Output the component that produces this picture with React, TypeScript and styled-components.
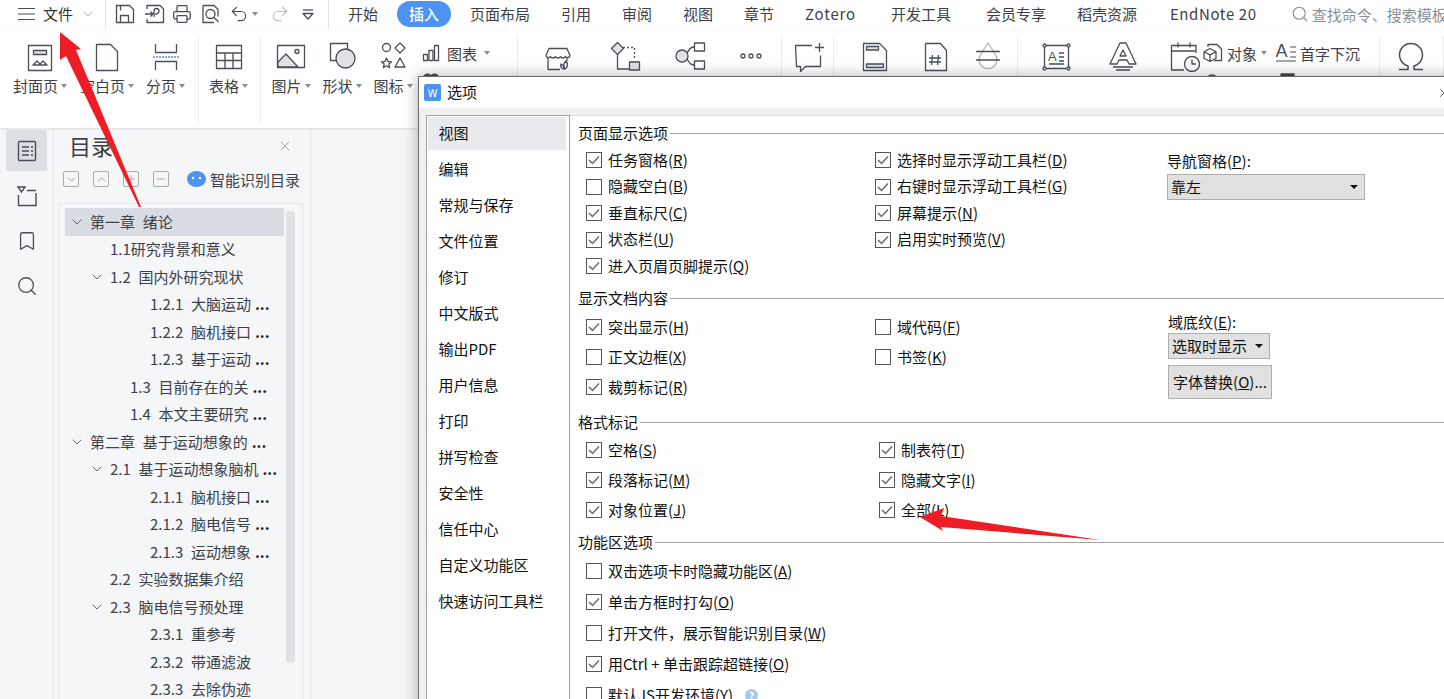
import React from 'react';
import styled, { createGlobalStyle } from 'styled-components';
import { Bookmark, ChevronDown, ChevronUp, Minus, Plus, Printer, Redo2, Search, Undo2, X } from 'lucide-react';

const INK = '#4a4e57';

const GlobalStyle = createGlobalStyle`
  html, body {
    margin: 0;
    height: 100%;
    overflow: hidden;
    background: #f5f6f8;
  }
  #root {
    height: 699px;
    overflow: hidden;
  }
  * { box-sizing: border-box; }
`;

const Page = styled.div`
  position: relative;
  width: 1444px;
  height: 699px;
  overflow: hidden;
  display: flex;
  flex-direction: column;
  font-family: "Noto Sans CJK SC", "Noto Sans", sans-serif;
  font-size: 15px;
  color: #3c4048;
  background: #f5f6f8;
`;

/* ---------- top bar ---------- */

const TopBar = styled.div`
  height: 30px;
  flex: none;
  display: flex;
  align-items: center;
  padding-bottom: 2px;
  background: #fff;
`;

const FileMenu = styled.div`
  width: 106px;
  height: 29px;
  flex: none;
  display: flex;
  align-items: center;
  padding-left: 18px;
  border-right: 1px solid #e3e3e3;
  color: #30343a;
`;

const FileLabel = styled.span`
  margin: 0 7px 0 8px;
  line-height: 20px;
`;

const QuickBar = styled.div`
  width: 223px;
  height: 29px;
  flex: none;
  display: flex;
  align-items: center;
  border-right: 1px solid #e3e3e3;
`;

const QuickSlot = styled.span<{ $ml: number }>`
  display: flex;
  margin-left: ${p => p.$ml}px;
`;

const Tabs = styled.div`
  flex: none;
  display: flex;
  align-items: center;
  gap: 7px;
  margin-left: 7px;
`;

const Tab = styled.div<{ $active?: boolean; $ml?: number; $ls?: number }>`
  height: 26px;
  margin-left: ${p => p.$ml ?? 0}px;
  padding: 0 12px;
  border-radius: 13px;
  line-height: 25px;
  letter-spacing: ${p => p.$ls ?? 0}px;
  white-space: nowrap;
  background: ${p => (p.$active ? '#4c93f2' : 'transparent')};
  color: ${p => (p.$active ? '#fff' : '#3c4048')};
  font-weight: ${p => (p.$active ? 500 : 400)};
`;

const SearchBox = styled.div`
  flex: none;
  display: flex;
  align-items: center;
  gap: 3px;
  margin-left: 22px;
  color: #8b9098;
  white-space: nowrap;
`;

/* ---------- ribbon ---------- */

const Ribbon = styled.div`
  height: 98px;
  flex: none;
  display: grid;
  grid-template-columns: 199px 62px 257px 264px 52px 184px 362px 1fr;
  padding-top: 6px;
  background: #fff;
  box-shadow: 0 1px 3px rgba(0, 0, 0, 0.1);
  position: relative;
  z-index: 1;
`;

const RibbonGroup = styled.div<{ $pl?: number; $gap?: number }>`
  height: 88px;
  display: flex;
  align-items: flex-start;
  gap: ${p => p.$gap ?? 0}px;
  padding-left: ${p => p.$pl ?? 0}px;
  border-right: 1px solid #ececee;
`;

const RibbonItem = styled.div<{ $w: number }>`
  width: ${p => p.$w}px;
  flex: none;
  display: flex;
  flex-direction: column;
  align-items: center;
  padding-top: 4px;
`;

const IconSlot = styled.div<{ $w: number; $ml?: number }>`
  width: ${p => p.$w}px;
  margin-left: ${p => p.$ml ?? 0}px;
  flex: none;
  display: flex;
  justify-content: center;
  padding-top: 4px;
`;

const ItemLabel = styled.div`
  display: flex;
  align-items: center;
  gap: 3px;
  margin-top: 4px;
  line-height: 20px;
  white-space: nowrap;
`;

const Caret = styled.i`
  width: 0;
  height: 0;
  border-left: 3.5px solid transparent;
  border-right: 3.5px solid transparent;
  border-top: 4px solid #8a8d93;
`;

const SmallStack = styled.div<{ $ml: number }>`
  margin-left: ${p => p.$ml}px;
  display: flex;
  flex-direction: column;
  gap: 4px;
  padding-top: 5px;
`;

const SmallRow = styled.div`
  height: 24px;
  display: flex;
  align-items: center;
`;

const SmallItem = styled.div<{ $gap: number; $w?: number }>`
  display: flex;
  align-items: center;
  gap: ${p => p.$gap}px;
  ${p => (p.$w ? `width: ${p.$w}px;` : '')}
  white-space: nowrap;
`;

/* ---------- workspace ---------- */

const Workspace = styled.div`
  flex: 1;
  min-height: 0;
  display: flex;
`;

const Rail = styled.div`
  width: 54px;
  flex: none;
  display: flex;
  flex-direction: column;
  gap: 4px;
  padding: 2px 0 0 6px;
  border-right: 1px solid #e6e7ea;
`;

const RailButton = styled.div<{ $active?: boolean }>`
  width: 41px;
  height: 41px;
  display: flex;
  align-items: center;
  justify-content: center;
  border-radius: 3px;
  background: ${p => (p.$active ? '#dcdfe4' : 'transparent')};
`;

const OutlinePanel = styled.div`
  width: 257px;
  flex: none;
  border-right: 1px solid #e6e7ea;
  display: flex;
  flex-direction: column;
`;

const OutlineHeader = styled.div`
  height: 38px;
  flex: none;
  display: flex;
  align-items: center;
  justify-content: space-between;
  padding: 0 17px 2px 15px;
`;

const OutlineTitle = styled.div`
  font-size: 22px;
  line-height: 34px;
  margin-top: -2px;
  color: #3c4048;
`;

const OutlineTools = styled.div`
  height: 26px;
  flex: none;
  display: flex;
  align-items: center;
  padding-left: 9px;
  gap: 14px;
`;

const ToolButton = styled.div`
  width: 16px;
  height: 16px;
  border: 1.5px solid #a9abae;
  border-radius: 2px;
  display: flex;
  align-items: center;
  justify-content: center;
`;

const SmartLink = styled.div`
  display: flex;
  align-items: center;
  gap: 4px;
  margin-left: 4px;
  white-space: nowrap;
`;

const TreeBox = styled.div`
  flex: 1;
  min-height: 0;
  margin: 11px 6px 0 4px;
  padding: 4px 8px 0 6px;
  border: 1px solid #e8e9ec;
  border-bottom: none;
  border-radius: 3px 3px 0 0;
  display: flex;
  align-items: flex-start;
  overflow: hidden;
`;

const TreeList = styled.div`
  width: 219px;
  flex: none;
`;

const TreeRow = styled.div<{ $depth: number; $selected?: boolean }>`
  height: 27.5px;
  display: flex;
  align-items: center;
  padding-left: ${p => p.$depth}px;
  line-height: 26px;
  word-spacing: 0.5px;
  white-space: pre;
  background: ${p => (p.$selected ? '#d9dde3' : 'transparent')};
`;

const Twist = styled.span`
  width: 21px;
  margin-left: -1px;
  flex: none;
  display: flex;
  align-items: center;
`;

const Dots = styled.b`
  color: #22252a;
  font-weight: 700;
`;

const Scroller = styled.div`
  width: 8.5px;
  height: 452px;
  margin: 3px 0 0 2px;
  border-radius: 4px;
  background: #dfe1e4;
`;

const DocArea = styled.div`
  flex: 1;
`;

/* ---------- options dialog ---------- */

const Dialog = styled.div`
  position: absolute;
  left: 418px;
  top: 76px;
  width: 1038px;
  height: 700px;
  z-index: 2;
  display: flex;
  flex-direction: column;
  background: #f0f0f0;
  border: 1px solid #6c6c6c;
  box-shadow: 0 0 14px rgba(0, 0, 0, 0.32);
  color: #111;
`;

const DialogHead = styled.div`
  height: 31px;
  flex: none;
  display: flex;
  align-items: center;
  padding: 0 4px 0 5px;
  background: #fff;
`;

const AppBadge = styled.span`
  width: 17px;
  height: 17px;
  flex: none;
  border-radius: 2px;
  background: #4b93f3;
  color: #fff;
  font-size: 11px;
  line-height: 17px;
  text-align: center;
`;

const DialogTitle = styled.span`
  flex: 1;
  margin: -2px 0 0 6px;
  line-height: 20px;
`;

const DialogBody = styled.div`
  flex: 1;
  min-height: 0;
  display: flex;
  margin-top: 7px;
  padding-left: 7px;
`;

const NavList = styled.div`
  width: 144px;
  flex: none;
  padding: 1px 3px 0 1px;
  background: #fff;
  border: 1px solid #a3a3a3;
  border-bottom: none;
`;

const NavItem = styled.div<{ $active?: boolean }>`
  height: 33px;
  margin-bottom: 3px;
  padding-left: 10.5px;
  line-height: 32px;
  background: ${p => (p.$active ? '#e8eaee' : 'transparent')};
`;

const OptionsPane = styled.div`
  flex: 1;
  background: #fff;
  border-top: 1px solid #dedede;
  padding-left: 8px;
`;

const OptionSection = styled.section<{ $top: number }>`
  padding-top: ${p => p.$top}px;
`;

const SectionHead = styled.div`
  display: flex;
  align-items: center;
  height: 20px;
  white-space: nowrap;
  &::after {
    content: '';
    flex: 1;
    height: 1px;
    margin-left: 2px;
    background: #a6a6a6;
  }
`;

const HeadText = styled.span`
  line-height: 20px;
  margin-top: -1px;
`;

const SectionColumns = styled.div<{ $top: number }>`
  display: flex;
  align-items: flex-start;
  margin-top: ${p => p.$top}px;
  padding-left: 8px;
`;

const CheckColumn = styled.div<{ $w: number }>`
  width: ${p => p.$w}px;
  flex: none;
`;

const CheckRow = styled.div<{ $h: number }>`
  height: ${p => p.$h}px;
  display: flex;
  align-items: center;
  gap: 6px;
  white-space: nowrap;
`;

const CheckBox = styled.span`
  width: 16px;
  height: 16px;
  flex: none;
  display: flex;
  align-items: center;
  justify-content: center;
  background: #fff;
  border: 1px solid #555;
`;

const CheckLabel = styled.span`
  margin-top: -1px;
  line-height: 20px;
`;

const Hint = styled.span`
  width: 13px;
  height: 13px;
  margin-left: 6px;
  border-radius: 50%;
  background: #a9c8ec;
  color: #fff;
  font-size: 10px;
  line-height: 13px;
  font-weight: 700;
  text-align: center;
`;

const SideColumn = styled.div<{ $ml?: number; $pt?: number }>`
  margin-left: ${p => p.$ml ?? 0}px;
  padding-top: ${p => p.$pt ?? 0}px;
  flex: none;
`;

const SideLabel = styled.div<{ $mb: number }>`
  line-height: 20px;
  margin-bottom: ${p => p.$mb}px;
`;

const Select = styled.div<{ $w: number }>`
  width: ${p => p.$w}px;
  height: 26px;
  display: flex;
  align-items: center;
  justify-content: space-between;
  padding: 0 6px 0 3px;
  background: #e1e1e1;
  border: 1px solid #adadad;
  line-height: 24px;
`;

const SelectCaret = styled.i`
  width: 0;
  height: 0;
  border-left: 4px solid transparent;
  border-right: 4px solid transparent;
  border-top: 4px solid #111;
`;

const SideButton = styled.div`
  width: 104px;
  height: 34px;
  margin-top: 6px;
  background: #e1e1e1;
  border: 1px solid #adadad;
  line-height: 31px;
  text-align: center;
  white-space: nowrap;
`;

const ArrowLayer = styled.svg`
  position: absolute;
  inset: 0;
  z-index: 3;
  pointer-events: none;
`;

/* ---------- drawings ---------- */

const Ico = ({ children, size = 32 }: { children: React.ReactNode; size?: number }) => (
  <svg width={size} height={size} viewBox={`0 0 ${size} ${size}`} fill="none" stroke={INK} strokeWidth={1.3} strokeLinejoin="round">
    {children}
  </svg>
);

const GREY = '#dfe1e4';

const ribbon = {
  cover: <Ico><rect x="4.5" y="5.5" width="23" height="25" /><rect x="9.5" y="10.5" width="13" height="4" fill={GREY} /><path d="M9 25l4-4 3 3 3-3 4 4z" /></Ico>,
  blank: <Ico><path d="M5.5 4.5h14l7 7v19h-21z" /></Ico>,
  pageBreak: <Ico><path d="M5.5 4v8.500h21V4M5.500 30v-8.500h21V30" /><path d="M3 17h26" stroke="#5b8fe0" strokeDasharray="2 1" /></Ico>,
  table: <Ico><rect x="3.500" y="5.500" width="25" height="23" /><path d="M3.500 13h25M3.500 20.500h25M12 13v15.500M20 13v15.500" /></Ico>,
  image: <Ico><rect x="2.500" y="5.500" width="27" height="22" /><path d="M3 22l8-8 12 13H3z" fill={GREY} /><circle cx="22" cy="11.500" r="2" /></Ico>,
  shape: <Ico><rect x="4.500" y="3.500" width="17" height="17" /><circle cx="19.500" cy="18.500" r="9.500" fill={GREY} /></Ico>,
  symbols: <Ico><circle cx="9.500" cy="7.500" r="4" /><path d="M23 3l5 5-5 5-5-5zM9.500 18l1.500 3.500 3.500.3-2.700 2.400.9 3.600-3.200-2-3.200 2 .9-3.600-2.700-2.400 3.500-.3zM23 18l5 9H18z" /></Ico>,
  store: <Ico><path d="M7 8.500h18l3 7c0 2-3 3-4.500 1-1 2-4 2-5 0-1 2-4 2-5 0-1 2-4 2-5 0-1.500 2-4.500 1-4.500-1zM6 18v11.500h12M25 18v3" /><path d="M24 21c3 3 1 7-1 8-2-3-1-6 1-8zM19 24c2 1 3 3 3 5-3 0-4-3-3-5z" /></Ico>,
  flow: <Ico><path d="M8.500 2.500l6 6-6 6-6-6z" fill={GREY} /><path d="M14 7.500h11.500v12" strokeDasharray="2 2" /><path d="M8.500 15v14h12" /><rect x="20.500" y="22" width="10" height="8" fill={GREY} /></Ico>,
  mindmap: <Ico><circle cx="8" cy="16" r="6" fill={GREY} /><path d="M13 13c3-5 4-6 8-6M13 19c3 5 4 6 8 6" /><rect x="20.500" y="3" width="10" height="8" /><rect x="20.500" y="21" width="10" height="8" /></Ico>,
  more: <Ico><circle cx="8" cy="16" r="2" /><circle cx="16" cy="16" r="2" /><circle cx="24" cy="16" r="2" /></Ico>,
  comment: <Ico><path d="M20 5.500H3.500l1 21h4v5l5-5h15v-11" /><path d="M23 7.500h9M27.500 3v9" /></Ico>,
  header: <Ico><path d="M4.500 3.500h16l7 7v20h-23z" /><rect x="7.500" y="6.500" width="12" height="3.500" fill={GREY} /><rect x="7.500" y="24" width="17" height="3.500" fill={GREY} /></Ico>,
  pageNo: <Ico><path d="M5.500 3.500h15l6 7v20h-21z" /><path d="M12.500 15l-1 10M18.500 15l-1 10M9 18h12M9 22h12" /></Ico>,
  watermark: <Ico><path d="M16 3l7 11a9 9 0 1 1-14 0z" stroke="#b4b6ba" /><path d="M4 11.500h24M4 20h24" /></Ico>,
  textbox: <Ico><rect x="4.500" y="5.500" width="24" height="23" /><circle cx="4.500" cy="5.500" r="1.500" fill="#fff" /><circle cx="28.500" cy="5.500" r="1.500" fill="#fff" /><circle cx="4.500" cy="28.500" r="1.500" fill="#fff" /><circle cx="28.500" cy="28.500" r="1.500" fill="#fff" /><text x="8" y="21" fontSize="13" fill={INK} stroke="none" fontFamily="Liberation Sans">A</text><path d="M9 24h15M19 13h5M19 17h5M19 21h5" /></Ico>,
  wordart: <Ico><path d="M16 3l-3 0L3 24h7l2-4h8l2 4h7L19 3zM13 16l3-6 3 6z" /><path d="M6 27h20M9 30h14" /></Ico>,
  calendar: <Ico><path d="M28 13V5.500H3.500V30H16" /><path d="M3.500 11h24M10 2.500v5M22 2.500v5" /><circle cx="24" cy="24" r="7.500" /><path d="M24 19.500V24h4" /></Ico>,
  omega: <Ico><path d="M4 29.500h9v-3.500a11.500 11.500 0 1 1 6 0v3.500h9" strokeWidth={1.5} /></Ico>,
};

const small = {
  chart: <Ico size={18}><rect x="1.500" y="10.500" width="4" height="6" /><rect x="7" y="6.500" width="4" height="10" /><rect x="12.500" y="1.500" width="4" height="15" /></Ico>,
  cube: <Ico size={20}><path d="M5 4V1.500h9l4.500 4.500v11.500H11" /><path d="M7 5.500l6 3.200v6.600l-6 3.200-6-3.200V8.700zM1 8.700l6 3.200 6-3.200M7 11.900v6.600" /></Ico>,
  dropcap: (
    <svg width="20" height="24" viewBox="0 0 20 24" fill="none" stroke={INK} strokeWidth={1.2}>
      <text x="-0.500" y="16" fontSize="18" fill={INK} stroke="none" fontFamily="Liberation Sans">A</text>
      <path d="M0 20h20M14 6h6M14 11h6M14 16h6" />
    </svg>
  ),
  hiddenA: <Ico size={18}><path d="M2 4c2-3 6-2 7 0 1-2 5-3 7 0v10H2z" fill={INK} /></Ico>,
  hiddenB: <Ico size={18}><circle cx="9" cy="9" r="6" /></Ico>,
  hiddenC: <Ico size={18}><rect x="3" y="2" width="13" height="14" fill="#3f4249" /></Ico>,
};

const quick = {
  save: <Ico size={22}><path d="M2.500 2.500h13l4 4v13h-17zM6.500 19v-6.500h8V19M6.500 3v4.500" /></Ico>,
  share: <Ico size={22}><path d="M3 6V2.500h13l3.500 3.500v13.500H3V16" /><path d="M1 11h8M6.500 8.500L9 11l-2.500 2.500" /><path d="M10 14V8a2.500 2.500 0 0 1 5 0c0 2.500-2.500 3-4 3" /></Ico>,
  preview: <Ico size={22}><path d="M3 2.500h11l4 4v7M14 19.500H3v-17" /><circle cx="10.500" cy="11" r="4.500" /><path d="M14 14.500l4.500 4.500" /></Ico>,
  quickMenu: <Ico size={14}><path d="M2 3h10" /><path d="M2 6.500h10L7 12z" fill="#fff" /></Ico>,
};

const Check = () => (
  <svg width="12" height="10" viewBox="0 0 12 10" fill="none" stroke="#6b6b6b" strokeWidth={1.5}>
    <path d="M1 5l3.500 3.500L11 1.500" />
  </svg>
);

const Twisty = () => <Twist><ChevronDown size={16} color="#4a4e57" strokeWidth={1.3} /></Twist>;

/* ---------- data ---------- */

const tabs = [
  { label: '开始' },
  { label: '插入', active: true },
  { label: '页面布局' },
  { label: '引用' },
  { label: '审阅' },
  { label: '视图' },
  { label: '章节' },
  { label: 'Zotero', ls: 0.8 },
  { label: '开发工具', ml: 4 },
  { label: '会员专享', ml: 4 },
  { label: '稻壳资源' },
  { label: 'EndNote 20', ml: 2, ls: 0.6 },
];

const navItems = ['视图', '编辑', '常规与保存', '文件位置', '修订', '中文版式', '输出PDF', '用户信息', '打印', '拼写检查', '安全性', '信任中心', '自定义功能区', '快速访问工具栏'];

type TreeEntry = { text: string; depth: number; open?: boolean; cut?: boolean; selected?: boolean };

const tree: TreeEntry[] = [
  { text: '第一章  绪论', depth: 5, open: true, selected: true },
  { text: '1.1研究背景和意义', depth: 45 },
  { text: '1.2  国内外研究现状', depth: 25, open: true },
  { text: '1.2.1  大脑运动', depth: 85, cut: true },
  { text: '1.2.2  脑机接口', depth: 85, cut: true },
  { text: '1.2.3  基于运动', depth: 85, cut: true },
  { text: '1.3  目前存在的关', depth: 65, cut: true },
  { text: '1.4  本文主要研究', depth: 65, cut: true },
  { text: '第二章  基于运动想象的', depth: 5, open: true, cut: true },
  { text: '2.1  基于运动想象脑机', depth: 25, open: true, cut: true },
  { text: '2.1.1  脑机接口', depth: 85, cut: true },
  { text: '2.1.2  脑电信号', depth: 85, cut: true },
  { text: '2.1.3  运动想象', depth: 85, cut: true },
  { text: '2.2  实验数据集介绍', depth: 45 },
  { text: '2.3  脑电信号预处理', depth: 25, open: true },
  { text: '2.3.1  重参考', depth: 85 },
  { text: '2.3.2  带通滤波', depth: 85 },
  { text: '2.3.3  去除伪迹', depth: 85 },
];

type Option = { label: string; key: string; checked: boolean; hint?: boolean };

const opt = (label: string, key: string, checked = true, hint = false): Option => ({ label, key, checked, hint });

const Options = ({ items, h }: { items: Option[]; h: number }) => (
  <>
    {items.map(o => (
      <CheckRow $h={h} key={o.label}>
        <CheckBox>{o.checked && <Check />}</CheckBox>
        <CheckLabel>{o.label}(<u>{o.key}</u>)</CheckLabel>
        {o.hint && <Hint>?</Hint>}
      </CheckRow>
    ))}
  </>
);

export default function App() {
  return (
    <Page>
      <GlobalStyle />
      <TopBar>
        <FileMenu>
          <svg width="17" height="14" viewBox="0 0 17 14" stroke={INK} strokeWidth={1.2}><path d="M0 1.500h17M0 7h17M0 12.500h17" /></svg>
          <FileLabel>文件</FileLabel>
          <ChevronDown size={16} color="#a4a6aa" strokeWidth={1.4} />
        </FileMenu>
        <QuickBar>
          <QuickSlot $ml={8}>{quick.save}</QuickSlot>
          <QuickSlot $ml={8}>{quick.share}</QuickSlot>
          <QuickSlot $ml={6}><Printer size={20} color={INK} strokeWidth={1.5} /></QuickSlot>
          <QuickSlot $ml={8}>{quick.preview}</QuickSlot>
          <QuickSlot $ml={7}><Undo2 size={20} color={INK} strokeWidth={1.4} /></QuickSlot>
          <QuickSlot $ml={3}><Caret /></QuickSlot>
          <QuickSlot $ml={12}><Redo2 size={20} color="#bcbec2" strokeWidth={1.4} /></QuickSlot>
          <QuickSlot $ml={11}>{quick.quickMenu}</QuickSlot>
        </QuickBar>
        <Tabs>
          {tabs.map(t => <Tab key={t.label} $active={t.active} $ml={t.ml} $ls={t.ls}>{t.label}</Tab>)}
        </Tabs>
        <SearchBox>
          <Search size={18} color="#8b9098" strokeWidth={1.5} />
          查找命令、搜索模板
        </SearchBox>
      </TopBar>

      <Ribbon>
        <RibbonGroup $pl={13} $gap={13}>
          <RibbonItem $w={54}>{ribbon.cover}<ItemLabel>封面页<Caret /></ItemLabel></RibbonItem>
          <RibbonItem $w={54}>{ribbon.blank}<ItemLabel>空白页<Caret /></ItemLabel></RibbonItem>
          <RibbonItem $w={37}>{ribbon.pageBreak}<ItemLabel>分页<Caret /></ItemLabel></RibbonItem>
        </RibbonGroup>
        <RibbonGroup $pl={10}>
          <RibbonItem $w={39}>{ribbon.table}<ItemLabel>表格<Caret /></ItemLabel></RibbonItem>
        </RibbonGroup>
        <RibbonGroup $pl={10} $gap={11}>
          <RibbonItem $w={40}>{ribbon.image}<ItemLabel>图片<Caret /></ItemLabel></RibbonItem>
          <RibbonItem $w={40}>{ribbon.shape}<ItemLabel>形状<Caret /></ItemLabel></RibbonItem>
          <RibbonItem $w={40}>{ribbon.symbols}<ItemLabel>图标<Caret /></ItemLabel></RibbonItem>
          <SmallStack $ml={-2}>
            <SmallRow><SmallItem $gap={7}>{small.chart}<span>图表</span><Caret /></SmallItem></SmallRow>
            <SmallRow>{small.hiddenA}</SmallRow>
          </SmallStack>
        </RibbonGroup>
        <RibbonGroup>
          <IconSlot $w={80}>{ribbon.store}</IconSlot>
          <IconSlot $w={54}>{ribbon.flow}</IconSlot>
          <IconSlot $w={76}>{ribbon.mindmap}</IconSlot>
          <IconSlot $w={46}>{ribbon.more}</IconSlot>
        </RibbonGroup>
        <RibbonGroup>
          <IconSlot $w={51}>{ribbon.comment}</IconSlot>
        </RibbonGroup>
        <RibbonGroup>
          <IconSlot $w={82}>{ribbon.header}</IconSlot>
          <IconSlot $w={40}>{ribbon.pageNo}</IconSlot>
          <IconSlot $w={64}>{ribbon.watermark}</IconSlot>
        </RibbonGroup>
        <RibbonGroup>
          <IconSlot $w={76}>{ribbon.textbox}</IconSlot>
          <IconSlot $w={58}>{ribbon.wordart}</IconSlot>
          <IconSlot $w={32} $ml={16}>{ribbon.calendar}</IconSlot>
          <SmallStack $ml={3}>
            <SmallRow>
              <SmallItem $gap={4} $w={73}>{small.cube}<span>对象</span><Caret /></SmallItem>
              <SmallItem $gap={4}>{small.dropcap}<span>首字下沉</span></SmallItem>
            </SmallRow>
            <SmallRow>
              <SmallItem $gap={0} $w={75}>{small.hiddenB}</SmallItem>
              {small.hiddenC}
            </SmallRow>
          </SmallStack>
        </RibbonGroup>
        <RibbonGroup $pl={15}>
          <IconSlot $w={32}>{ribbon.omega}</IconSlot>
        </RibbonGroup>
      </Ribbon>

      <Workspace>
        <Rail>
          <RailButton $active>
            <svg width="20" height="22" viewBox="0 0 20 22" fill="none" stroke={INK} strokeWidth={1.4}>
              <rect x="1.500" y="1.500" width="17" height="19" rx="1" />
              <path d="M5 7h7M14 7h2M5 11h7M14 11h2M5 15h7M14 15h2" />
            </svg>
          </RailButton>
          <RailButton>
            <svg width="22" height="22" viewBox="0 0 22 22" fill="none" stroke={INK} strokeWidth={1.4}>
              <path d="M2 2h7L5.500 7zM11 5.500h9M2.500 10v10.500h17.500V8" />
            </svg>
          </RailButton>
          <RailButton><Bookmark size={22} color={INK} strokeWidth={1.4} /></RailButton>
          <RailButton><Search size={22} color={INK} strokeWidth={1.4} /></RailButton>
        </Rail>

        <OutlinePanel>
          <OutlineHeader>
            <OutlineTitle>目录</OutlineTitle>
            <X size={16} color="#85888d" strokeWidth={1.1} />
          </OutlineHeader>
          <OutlineTools>
            <ToolButton><ChevronDown size={13} color="#85888d" strokeWidth={1.4} /></ToolButton>
            <ToolButton><ChevronUp size={13} color="#85888d" strokeWidth={1.4} /></ToolButton>
            <ToolButton><Plus size={12} color="#85888d" strokeWidth={1.4} /></ToolButton>
            <ToolButton><Minus size={12} color="#85888d" strokeWidth={1.4} /></ToolButton>
            <SmartLink>
              <svg width="19" height="16" viewBox="0 0 19 16"><ellipse cx="9.500" cy="8" rx="9.500" ry="8" fill="#4f94f0" /><circle cx="6" cy="7" r="1.200" fill="#fff" /><circle cx="13" cy="7" r="1.200" fill="#fff" /></svg>
              智能识别目录
            </SmartLink>
          </OutlineTools>
          <TreeBox>
            <TreeList>
              {tree.map(r => (
                <TreeRow key={r.text} $depth={r.depth} $selected={r.selected}>
                  {r.open && <Twisty />}
                  {r.text}{r.cut && <Dots> ...</Dots>}
                </TreeRow>
              ))}
            </TreeList>
            <Scroller />
          </TreeBox>
        </OutlinePanel>

        <DocArea />
      </Workspace>

      <Dialog>
        <DialogHead>
          <AppBadge>W</AppBadge>
          <DialogTitle>选项</DialogTitle>
          <X size={14} color="#222" strokeWidth={1.2} />
        </DialogHead>
        <DialogBody>
          <NavList>
            {navItems.map((n, i) => <NavItem key={n} $active={i === 0}>{n}</NavItem>)}
          </NavList>
          <OptionsPane>
            <OptionSection $top={7}>
              <SectionHead><HeadText>页面显示选项</HeadText></SectionHead>
              <SectionColumns $top={4}>
                <CheckColumn $w={289}>
                  <Options h={26.5} items={[opt('任务窗格', 'R'), opt('隐藏空白', 'B', false), opt('垂直标尺', 'C'), opt('状态栏', 'U'), opt('进入页眉页脚提示', 'Q')]} />
                </CheckColumn>
                <CheckColumn $w={292}>
                  <Options h={26.5} items={[opt('选择时显示浮动工具栏', 'D'), opt('右键时显示浮动工具栏', 'G'), opt('屏幕提示', 'N'), opt('启用实时预览', 'V')]} />
                </CheckColumn>
                <SideColumn $pt={4}>
                  <SideLabel $mb={3}>导航窗格(<u>P</u>):</SideLabel>
                  <Select $w={198}>靠左<SelectCaret /></Select>
                </SideColumn>
              </SectionColumns>
            </OptionSection>

            <OptionSection $top={8.5}>
              <SectionHead><HeadText>显示文档内容</HeadText></SectionHead>
              <SectionColumns $top={4}>
                <CheckColumn $w={289}>
                  <Options h={30} items={[opt('突出显示', 'H'), opt('正文边框', 'X', false), opt('裁剪标记', 'R')]} />
                </CheckColumn>
                <CheckColumn $w={292}>
                  <Options h={30} items={[opt('域代码', 'F', false), opt('书签', 'K', false)]} />
                </CheckColumn>
                <SideColumn $ml={1}>
                  <SideLabel $mb={1}>域底纹(<u>E</u>):</SideLabel>
                  <Select $w={102}>选取时显示<SelectCaret /></Select>
                  <SideButton>字体替换(<u>O</u>)...</SideButton>
                </SideColumn>
              </SectionColumns>
            </OptionSection>

            <OptionSection $top={10}>
              <SectionHead><HeadText>格式标记</HeadText></SectionHead>
              <SectionColumns $top={3}>
                <CheckColumn $w={293}>
                  <Options h={30} items={[opt('空格', 'S'), opt('段落标记', 'M'), opt('对象位置', 'J')]} />
                </CheckColumn>
                <CheckColumn $w={292}>
                  <Options h={30} items={[opt('制表符', 'T'), opt('隐藏文字', 'I'), opt('全部', 'L')]} />
                </CheckColumn>
              </SectionColumns>
            </OptionSection>

            <OptionSection $top={7}>
              <SectionHead><HeadText>功能区选项</HeadText></SectionHead>
              <SectionColumns $top={3.5}>
                <CheckColumn $w={600}>
                  <Options h={31} items={[opt('双击选项卡时隐藏功能区', 'A', false), opt('单击方框时打勾', 'O'), opt('打开文件，展示智能识别目录', 'W', false), opt('用Ctrl + 单击跟踪超链接', 'O'), opt('默认JS开发环境', 'Y', false, true)]} />
                </CheckColumn>
              </SectionColumns>
            </OptionSection>
          </OptionsPane>
        </DialogBody>
      </Dialog>

      <ArrowLayer width="1444" height="699" viewBox="0 0 1444 699">
        <polygon points="60,32 81,49 76,50 141,207 139,207 66,56 60,60" fill="#ee1c25" />
        <polygon points="920,517 944,508 941,516 1100,540 941,527 943,531" fill="#ee1c25" />
      </ArrowLayer>
    </Page>
  );
}
